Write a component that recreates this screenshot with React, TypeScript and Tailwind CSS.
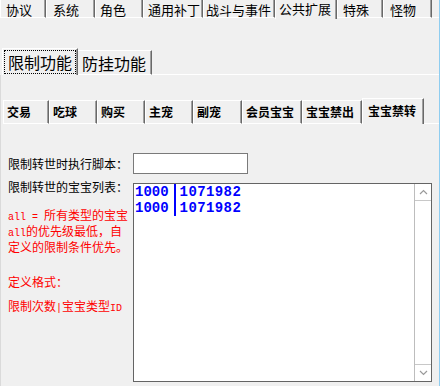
import * as React from "react";

const topTabs = [
  { label: "协议", cls: "w-[46px] pl-[5px]" },
  { label: "系统", cls: "w-[49px] pl-[6px]" },
  { label: "角色", cls: "w-[48px] pl-[4px]" },
  { label: "通用补丁", cls: "w-[60px] pl-[4px]" },
  { label: "战斗与事件", cls: "w-[72px] pl-[2px]" },
  { label: "公共扩展", cls: "w-[62px] pl-[3px]", active: true },
  { label: "特殊", cls: "w-[46px] pl-[5px]" },
  { label: "怪物", cls: "w-[49px] pl-[6px]" },
];

const petTabs = [
  { label: "交易", cls: "w-[46px]" },
  { label: "吃球", cls: "w-[48px]" },
  { label: "购买", cls: "w-[48px]" },
  { label: "主宠", cls: "w-[48px]" },
  { label: "副宠", cls: "w-[49px]" },
  { label: "会员宝宝", cls: "w-[60px]" },
  { label: "宝宝禁出", cls: "w-[60px]" },
  { label: "宝宝禁转", cls: "w-[62px]", active: true },
];

function Chevron({ up }: { up?: boolean }) {
  return (
    <svg width="9" height="6" viewBox="0 0 9 6">
      <path
        d={up ? "M1 5 L4.5 1.5 L8 5" : "M1 1 L4.5 4.5 L8 1"}
        fill="none"
        stroke="#9a9a9a"
        strokeWidth="1.2"
      />
    </svg>
  );
}

function Latin({ children }: { children: React.ReactNode }) {
  return <span className="font-['Liberation_Mono',monospace] text-[10px]">{children}</span>;
}

export default function App() {
  const rows = ["1071982", "1071982"];

  return (
    <div className="w-[440px] h-[386px] overflow-hidden bg-[#f0f0f0] border-r border-[#8fcdf0] flex flex-col font-['Noto_Sans_CJK_SC',sans-serif] text-black">
      {/* main tabs */}
      <div className="flex h-[19px] shrink-0">
        {topTabs.map((t) =>
          t.active ? (
            <div
              key={t.label}
              className={`${t.cls} h-[19px] border-l border-white border-r border-r-[#696969] shadow-[inset_-1px_0_0_#a0a0a0] pt-[1px] text-[13px] leading-[15px] whitespace-nowrap`}
            >
              {t.label}
            </div>
          ) : (
            <div
              key={t.label}
              className={`${t.cls} h-[18px] border-l border-white border-b border-b-white border-r border-r-[#696969] shadow-[inset_-1px_0_0_#a0a0a0] pt-[2px] text-[13px] leading-[15px] whitespace-nowrap`}
            >
              {t.label}
            </div>
          )
        )}
        <div className="flex-1 h-[18px] border-b border-white" />
      </div>

      <div className="h-[29px] shrink-0" />

      {/* sub tabs */}
      <div className="flex items-end h-[27px] shrink-0 pl-[2px]">
        <div className="w-[76px] h-[27px] border-l border-t border-white border-r border-r-[#696969] shadow-[inset_-1px_0_0_#a0a0a0] p-[1px]">
          <div className="h-full border border-dotted border-black flex items-center pl-[3px] text-[16px] whitespace-nowrap">
            限制功能
          </div>
        </div>
        <div className="w-[74px] h-[25px] border-t border-white border-b border-b-white border-r border-r-[#696969] shadow-[inset_-1px_0_0_#a0a0a0] flex items-center pt-[1px] pl-[4px] text-[16px] whitespace-nowrap">
          防挂功能
        </div>
        <div className="flex-1 h-[25px] border-b border-white" />
      </div>

      <div className="flex-1 flex flex-col border-l border-[#dadada]">
        <div className="h-[23px] shrink-0" />

        {/* pet tabs */}
        <div className="flex items-end h-[26px] shrink-0 pl-[2px]">
          {petTabs.map((t) =>
            t.active ? (
              <div
                key={t.label}
                className={`${t.cls} h-[26px] border-l border-t border-white border-r border-r-[#696969] shadow-[inset_-1px_0_0_#a0a0a0] flex items-center pb-[2px] pl-[5px] text-[12px] font-bold whitespace-nowrap`}
              >
                {t.label}
              </div>
            ) : (
              <div
                key={t.label}
                className={`${t.cls} h-[24px] border-l border-t border-white border-b border-b-white border-r border-r-[#696969] shadow-[inset_-1px_0_0_#a0a0a0] flex items-center pl-[3px] text-[12px] font-bold whitespace-nowrap`}
              >
                {t.label}
              </div>
            )
          )}
          <div className="flex-1 h-[24px] border-b border-white" />
        </div>

        {/* content */}
        <div className="flex-1 flex flex-col pl-[7px]">
          <div className="flex mt-[29px]">
            <div className="w-[125px] h-[21px] flex items-center text-[12px] whitespace-nowrap">
              限制转世时执行脚本：
            </div>
            <div className="w-[115px] h-[21px] bg-white border border-[#7a7a7a]" />
          </div>

          <div className="flex mt-[6px]">
            <div className="w-[125px] text-[12px] leading-[13px] whitespace-nowrap">
              <div>限制转世的宝宝列表：</div>
              <div className="mt-[15px] text-[#ff0000]">
                <div>
                  <Latin>all = </Latin>所有类型的宝宝
                </div>
                <div>
                  <Latin>all</Latin>的优先级最低，自
                </div>
                <div>定义的限制条件优先。</div>
                <div className="mt-[22px]">定义格式：</div>
                <div className="mt-[11px]">
                  限制次数<Latin>|</Latin>宝宝类型<Latin>ID</Latin>
                </div>
              </div>
            </div>

            <div className="mt-[3px] w-[299px] h-[199px] bg-white border border-[#646464] flex">
              <div className="flex-1 pl-[1px] font-['Liberation_Mono',monospace] font-bold text-[14px] leading-[16px] text-[#0000ff]">
                {rows.map((r, i) => (
                  <div key={i} className="flex h-[16px] items-stretch">
                    <span className="flex items-center">1000</span>
                    <span className="w-[2px] bg-[#0000ff] ml-[5px] mr-[4px]" />
                    <span className="flex items-center tracking-[0.4px]">{r}</span>
                  </div>
                ))}
              </div>
              <div className="w-[17px] h-full border-l border-[#bdbdbd] flex flex-col justify-between">
                <div className="h-[17px] border-b border-[#c8c8c8] flex items-center justify-center">
                  <Chevron up />
                </div>
                <div className="h-[17px] border-t border-[#c8c8c8] flex items-center justify-center">
                  <Chevron />
                </div>
              </div>
            </div>
          </div>
        </div>
      </div>
    </div>
  );
}
